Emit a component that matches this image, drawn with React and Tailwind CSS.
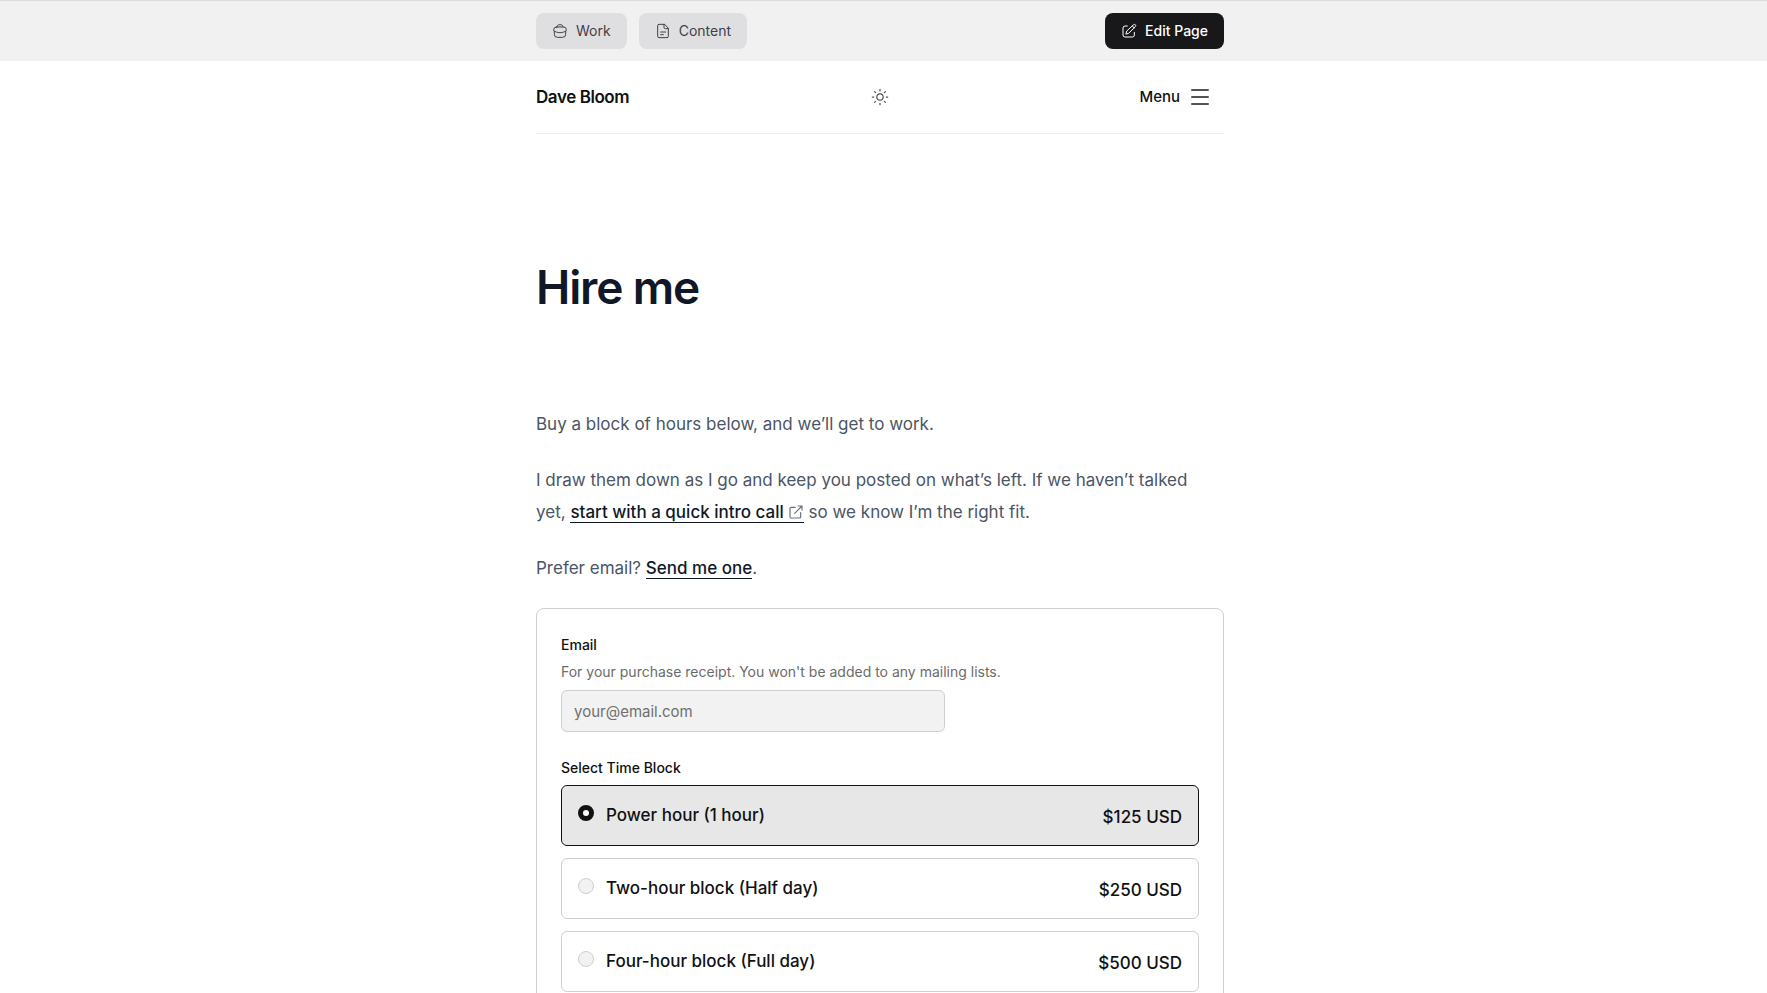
import React, { useState } from "react";

const blocks = [
  { id: "power", label: "Power hour (1 hour)", price: "$125 USD" },
  { id: "two", label: "Two-hour block (Half day)", price: "$250 USD" },
  { id: "four", label: "Four-hour block (Full day)", price: "$500 USD" },
];

const Icon = ({ className, strokeWidth = 1.5, children }) => (
  <svg
    className={className}
    viewBox="0 0 24 24"
    fill="none"
    stroke="currentColor"
    strokeWidth={strokeWidth}
    strokeLinecap="round"
    strokeLinejoin="round"
    aria-hidden="true"
  >
    {children}
  </svg>
);

const BriefcaseIcon = () => (
  <Icon className="w-4 h-4">
    <path d="M3.5 12.5V17a4.500 4.500 0 0 0 4.500 4.500h8a4.500 4.500 0 0 0 4.500-4.500v-4.500" />
    <path d="M6.500 6h11a4 4 0 0 1 4 4v1.500c-5.500 4-13.500 4-19 0V10a4 4 0 0 1 4-4z" />
    <path d="M7.500 6c0-2 1.200-3.300 3-3.300h3c1.800 0 3 1.300 3 3.300" />
  </Icon>
);

const DocumentIcon = () => (
  <Icon className="w-4 h-4">
    <path d="M14 2H6a2 2 0 0 0-2 2v16a2 2 0 0 0 2 2h12a2 2 0 0 0 2-2V8.500z" />
    <path d="M13.500 2v4.500a2 2 0 0 0 2 2H20" />
    <path d="M8.500 13.500h7.500M8.500 17.500h4" />
  </Icon>
);

const EditIcon = () => (
  <Icon className="w-4 h-4">
    <path d="M9.500 4.500H6a3 3 0 0 0-3 3V18a3 3 0 0 0 3 3h11a3 3 0 0 0 3-3v-4" />
    <path d="M18.800 2.600a1.900 1.900 0 0 1 2.700 2.700L11.500 15.500 7.300 16.700l1.200-4.200z" />
    <path d="M17 4.500l2.700 2.700" />
  </Icon>
);

const SunIcon = () => (
  <Icon className="w-5 h-5">
    <circle cx="12" cy="12" r="3.800" />
    <path d="M12 2.800v1.700M12 19.500v1.700M2.800 12h1.700M19.500 12h1.700M5.500 5.500l1.200 1.200M17.300 17.300l1.200 1.200M5.500 18.500l1.200-1.200M17.300 6.700l1.200-1.200" />
  </Icon>
);

const ExternalIcon = () => (
  <Icon className="inline w-4 h-4 ml-1 text-gray-500 align-[-2px]" strokeWidth={1.8}>
    <path d="M11 5H5a2 2 0 0 0-2 2v12a2 2 0 0 0 2 2h12a2 2 0 0 0 2-2v-6" />
    <path d="M15 3h6v6M21 3L10 14" />
  </Icon>
);

const AdminBar = () => (
  <div className="bg-[#f1f1f1] border-t border-[#dcdcdc] pr-[7px]">
    <div className="max-w-[688px] mx-auto py-3 flex items-center justify-between text-sm">
      <div className="flex gap-3">
        <button className="h-9 px-4 flex items-center gap-2 rounded-lg bg-[#dfdfe1] text-[#3f3f46]">
          <BriefcaseIcon />
          Work
        </button>
        <button className="h-9 px-4 flex items-center gap-2 rounded-lg bg-[#dfdfe1] text-[#3f3f46]">
          <DocumentIcon />
          Content
        </button>
      </div>
      <button className="h-9 px-4 flex items-center gap-2 rounded-lg bg-[#18181b] text-white font-medium">
        <EditIcon />
        Edit Page
      </button>
    </div>
  </div>
);

const Header = () => (
  <header className="h-[73px] grid grid-cols-3 items-center border-b border-[#f0f0f0]">
    <a href="#home" className="text-[17px] leading-7 font-semibold tracking-tight text-[#111111]">
      Dave Bloom
    </a>
    <button className="justify-self-center text-[#52525b]" aria-label="Toggle theme">
      <SunIcon />
    </button>
    <button className="justify-self-end flex items-center gap-2 pr-3 text-[15px] leading-7 font-medium text-[#111111]">
      Menu
      <Icon className="w-6 h-6 text-[#52525b]" strokeWidth={2}>
        <path d="M4 5h16M4 12h16M4 19h16" />
      </Icon>
    </button>
  </header>
);

const PurchaseForm = () => {
  const [selected, setSelected] = useState("power");

  return (
    <form className="border border-[#cfcfcf] rounded-lg p-6 text-[#111111]">
      <label htmlFor="email" className="block text-sm leading-6 font-medium">
        Email
      </label>
      <p id="email-hint" className="text-sm text-[#6b6b6b] mt-[5px]">
        For your purchase receipt. You won't be added to any mailing lists.
      </p>
      <input
        id="email"
        type="email"
        aria-describedby="email-hint"
        placeholder="your@email.com"
        className="block w-full max-w-96 h-[42px] mt-2 px-3 text-[15px] rounded-md border border-[#cfcfcf] bg-[#f2f2f2] placeholder:text-[#6f6f6f]"
      />

      <fieldset className="mt-[26px]">
        <legend className="text-sm font-medium">Select Time Block</legend>
        <div className="mt-[7px] flex flex-col gap-3">
          {blocks.map((block) => (
            <label
              key={block.id}
              className={`h-[61px] px-4 flex items-center rounded-md border text-[17px] font-medium ${
                selected === block.id
                  ? "border-[#111111] bg-[#e7e7e7]"
                  : "border-[#cfcfcf] bg-white"
              }`}
            >
              <input
                type="radio"
                name="block"
                value={block.id}
                checked={selected === block.id}
                onChange={() => setSelected(block.id)}
                className="appearance-none w-4 h-4 mb-[5px] rounded-full border border-[#cfcfcf] bg-[#f2f2f2] checked:border-[5px] checked:border-[#111111] checked:bg-white"
              />
              <span className="ml-3">{block.label}</span>
              <span className="ml-auto mt-1">{block.price}</span>
            </label>
          ))}
        </div>
      </fieldset>
    </form>
  );
};

const App = () => {
  return (
    <div className="h-screen overflow-hidden bg-white font-['Inter',sans-serif]">
      <AdminBar />
      <div className="pr-[7px]">
        <div className="max-w-[688px] mx-auto">
          <Header />
          <main>
            <h1 className="mt-32 text-[46px] leading-[50px] font-semibold tracking-tight text-[#101828]">
              Hire me
            </h1>
            <div className="mt-24 mb-6 pr-4 space-y-6 text-[17px] leading-8 text-[#4a5565]">
              <p>Buy a block of hours below, and we’ll get to work.</p>
              <p>
                I draw them down as I go and keep you posted on what’s left. If we haven’t talked
                yet,{" "}
                <a href="#call" className="font-medium text-[#101828] border-b border-[#101828]">
                  start with a quick intro call
                  <ExternalIcon />
                </a>{" "}
                so we know I’m the right fit.
              </p>
              <p>
                Prefer email?{" "}
                <a href="#email" className="font-medium text-[#101828] border-b border-[#101828]">
                  Send me one
                </a>
                .
              </p>
            </div>
            <PurchaseForm />
          </main>
        </div>
      </div>
    </div>
  );
};

export default App;
